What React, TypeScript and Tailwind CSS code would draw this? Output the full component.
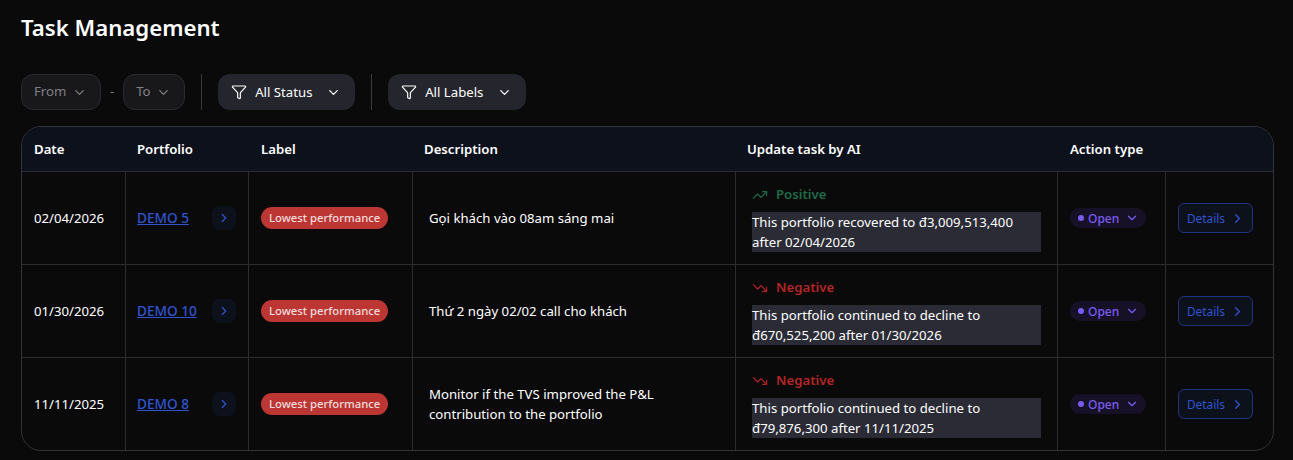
import { ChevronDown, ChevronRight, Funnel, TrendingDown, TrendingUp } from 'lucide-react';

const rows = [
  { date: '02/04/2026', portfolio: 'DEMO 5', desc: 'Gọi khách vào 08am sáng mai', positive: true, ai: ['This portfolio recovered to đ3,009,513,400', 'after 02/04/2026'] },
  { date: '01/30/2026', portfolio: 'DEMO 10', desc: 'Thứ 2 ngày 02/02 call cho khách', positive: false, ai: ['This portfolio continued to decline to', 'đ670,525,200 after 01/30/2026'] },
  { date: '11/11/2025', portfolio: 'DEMO 8', desc: 'Monitor if the TVS improved the P&L contribution to the portfolio', positive: false, ai: ['This portfolio continued to decline to', 'đ79,876,300 after 11/11/2025'] },
];

const cols = 'grid grid-cols-[103px_123px_164px_323px_322px_108px_1fr]';

function DateButton({ label, width }: { label: string; width: string }) {
  return (
    <button className={`h-9 pl-3 pr-[13px] flex items-center justify-between rounded-xl border border-[#2a2a2e] bg-[#18181b] text-[13.2px] text-[#808085] ${width}`}>
      {label}
      <ChevronDown size={15} />
    </button>
  );
}

function FilterButton({ label, width }: { label: string; width: string }) {
  return (
    <button className={`h-9 pl-[13px] pr-[14px] flex items-center rounded-xl bg-[#25252d] text-[13.2px] text-white ${width}`}>
      <Funnel size={16} strokeWidth={1.75} className="mr-2" />
      <span className="pt-px">{label}</span>
      <ChevronDown size={15} className="ml-auto" />
    </button>
  );
}

export default function App() {
  return (
    <div className="w-[1293px] h-[460px] overflow-hidden bg-[#0a0a0b] text-white px-[21px] pt-[13px] font-['Noto_Sans','Open_Sans',sans-serif]">
      <h1 className="text-[22.2px] leading-[30px] font-semibold">Task Management</h1>

      {/* Filters */}
      <div className="flex items-center mt-[31px] h-9">
        <DateButton label="From" width="w-[80px]" />
        <span className="mx-[9px] text-[13px] text-[#77777c]">-</span>
        <DateButton label="To" width="w-[62px]" />
        <div className="w-px h-9 bg-[#3a3a3e] mx-4" />
        <FilterButton label="All Status" width="w-[137px]" />
        <div className="w-px h-9 bg-[#3a3a3e] mx-4" />
        <FilterButton label="All Labels" width="w-[138px]" />
      </div>

      {/* Table */}
      <div className="mt-4 w-[1253px] h-[325px] rounded-[20px] border border-[#33333a] overflow-hidden">
        <div className={`${cols} h-[44px] pt-px bg-[#0d111c] items-center text-[13.2px] font-semibold`}>
          <div className="pl-3">Date</div>
          <div className="pl-3">Portfolio</div>
          <div className="pl-[13px]">Label</div>
          <div className="pl-3">Description</div>
          <div className="pl-3">Update task by AI</div>
          <div className="pl-[13px] col-span-2">Action type</div>
        </div>
        {rows.map(r => (
          <div key={r.date} className={`${cols} h-[93px] border-t border-[#2c2c31] text-[13.2px]`}>
            <div className="pl-3 pt-px flex items-center">{r.date}</div>
            <div className="border-l border-[#2c2c31] pl-[11px] pr-3 flex items-center justify-between">
              <a className="text-[#3054d0] text-[13.6px] font-medium underline">{r.portfolio}</a>
              <span className="w-6 h-6 rounded-lg bg-[#0d111c] flex items-center justify-center text-[#3054d0]">
                <ChevronRight size={14} />
              </span>
            </div>
            <div className="border-l border-[#2c2c31] pl-3 flex items-center">
              <span className="h-[22px] px-2 rounded-full bg-[#bc3633] text-[#f3dcdc] text-[11.3px] font-medium flex items-center">Lowest performance</span>
            </div>
            <div className="border-l border-[#2c2c31] pl-4 pr-8 flex items-center leading-[20px]">{r.desc}</div>
            <div className="border-l border-[#2c2c31] pl-4 pr-4 pt-[14px]">
              <div className={`flex items-center gap-2 font-semibold h-[18px] ${r.positive ? 'text-[#1f6b48]' : 'text-[#b42525]'}`}>
                {r.positive ? <TrendingUp size={16} strokeWidth={1.75} /> : <TrendingDown size={16} strokeWidth={1.75} />}
                {r.positive ? 'Positive' : 'Negative'}
              </div>
              <div className="mt-[8px] bg-[#2b2b35] leading-[20px]">
                {r.ai.map(line => <div key={line} className="whitespace-nowrap">{line}</div>)}
              </div>
            </div>
            <div className="border-l border-[#2c2c31] pl-3 flex items-center">
              <span className="h-5 w-[76px] pl-2 rounded-full bg-[#171127] text-[#7a5cf5] text-[12px] font-medium flex items-center gap-1">
                <span className="w-[6px] h-[6px] rounded-full bg-[#7a5cf5]" />
                <span className="pt-px">Open</span>
                <ChevronDown size={14} className="ml-[2px]" />
              </span>
            </div>
            <div className="border-l border-[#2c2c31] pl-3 flex items-center">
              <button className="w-[75px] h-[30px] pl-[8px] rounded-md border border-[#1f3480] bg-[#0d111c] text-[#3054d0] text-[11.8px] flex items-center gap-[5px]">
                <span className="pt-px">Details</span>
                <ChevronRight size={15} />
              </button>
            </div>
          </div>
        ))}
      </div>
    </div>
  );
}
